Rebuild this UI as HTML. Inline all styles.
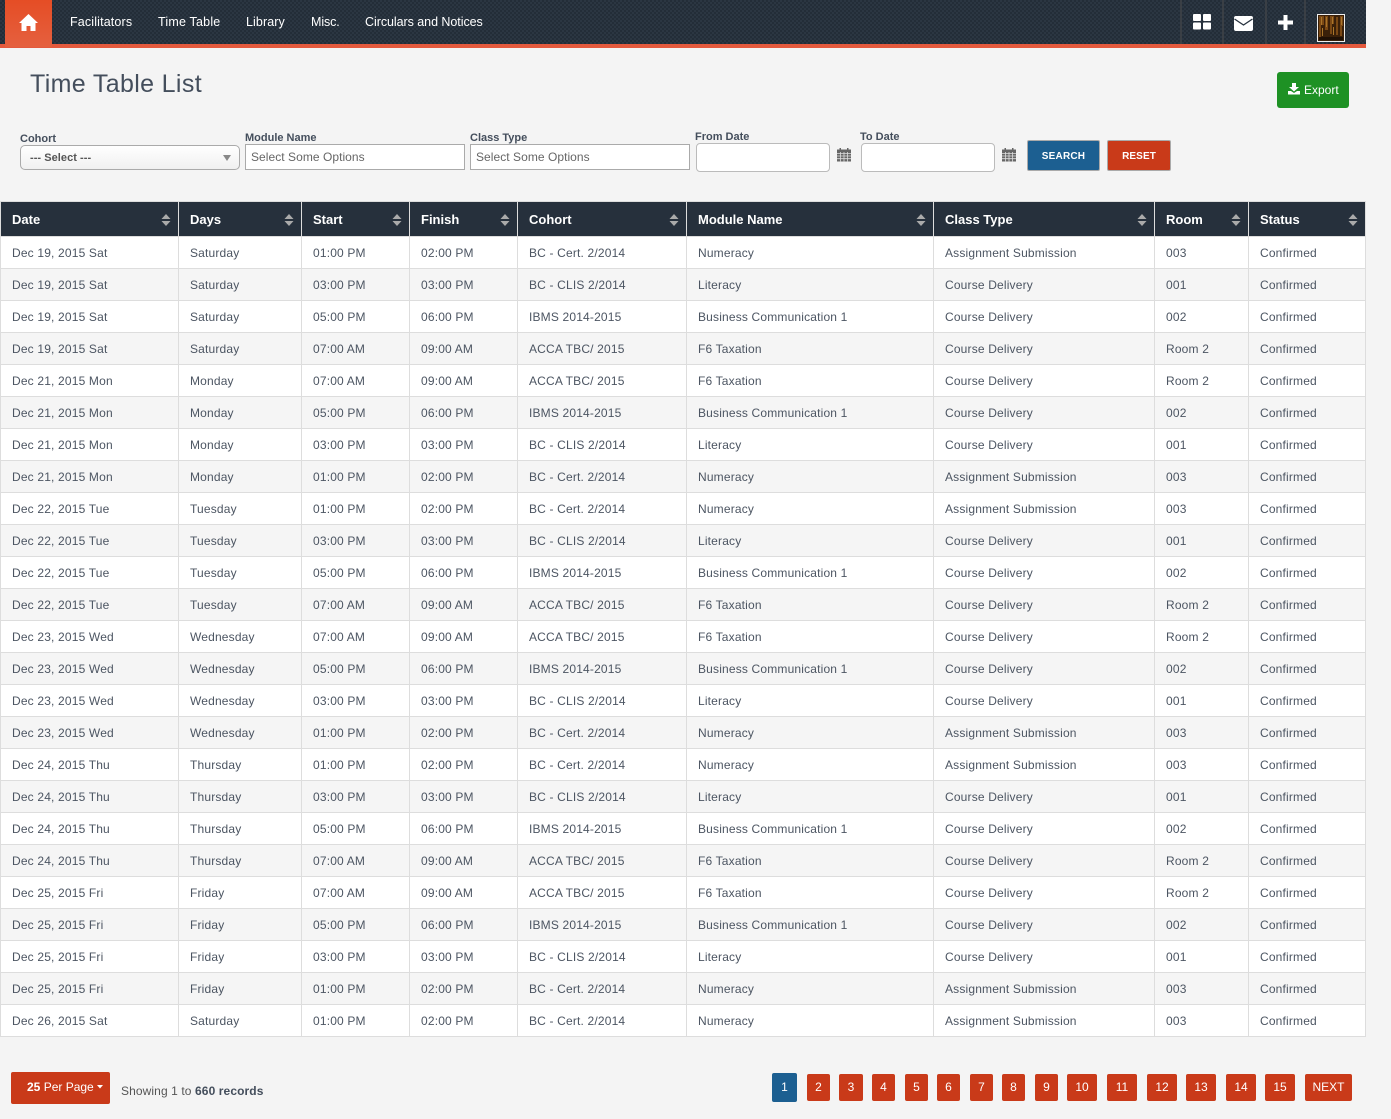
<!DOCTYPE html>
<html><head><meta charset="utf-8"><title>Time Table List</title>
<style>
html,body{margin:0;padding:0}
body{width:1391px;height:1119px;background:#f4f4f4;position:relative;overflow:hidden;font-family:"Liberation Sans",sans-serif;color:#444e5c}
.a{position:absolute;white-space:nowrap}
#nav{left:0;top:0;width:1366px;height:44px;background-color:#27323e;background-image:repeating-conic-gradient(#232d38 0 25%,#2b3642 0 50%);background-size:4px 4px}
#bar{left:0;top:44px;width:1366px;height:4px;background:#e4593d}
#home{left:5px;top:0;width:47px;height:47px;background:linear-gradient(#e54d25,#e5603f)}
.n{top:14px;font-size:12.5px;line-height:16px;color:#fff}
.sep{top:0;width:2px;height:44px;background:#3a3f45}
.lab{font-size:11px;font-weight:bold;line-height:13px;color:#444e5c}
.sel{box-sizing:border-box;background:#fff;border:1px solid #aaa;font-size:12px;line-height:25px;color:#666;padding-left:5px;letter-spacing:.05px}
.dt{box-sizing:border-box;background:#fff;border:1px solid #bbb;border-radius:4px;width:134px;height:29px;top:143px}
.btn{top:140px;height:31px;line-height:31px;text-align:center;color:#fff;font-size:10px;font-weight:bold;border-radius:2px;box-sizing:border-box;border:1px solid #aaa}
table{position:absolute;left:0;top:201px;width:1365px;border-collapse:collapse;table-layout:fixed;font-size:12px;color:#4c5562;letter-spacing:.17px}
th{background:#26303c;color:#fff;height:35px;padding:1px 0 0 11px;text-align:left;font-size:13px;letter-spacing:0;border:1px solid #ddd;position:relative;box-sizing:border-box}
th svg{position:absolute;right:7px;top:11px}
td{height:32px;padding:0 0 0 11px;border:1px solid #ddd;box-sizing:border-box;white-space:nowrap;overflow:hidden}
tr:nth-child(odd) td{background:#fff}
tr:nth-child(even) td{background:#f5f5f5}
.p{top:1074px;height:27px;line-height:27px;background:#c93a19;color:#fff;font-size:12px;text-align:center;border-radius:2px}
</style></head><body>
<div class="a" id="nav"></div><div class="a" id="bar"></div>
<div class="a" id="home"><svg width="47" height="46" viewBox="0 0 47 46" style="position:absolute;left:0;top:0"><path d="M23.5 14 L14 23 L16.500 23 L16.500 31 L21.500 31 L21.500 26 L25.500 26 L25.500 31 L30.500 31 L30.500 23 L33 23Z" fill="#fff"/></svg></div>
<div class="a n" style="left:70px;letter-spacing:.15px">Facilitators</div>
<div class="a n" style="left:158px;letter-spacing:.2px">Time Table</div>
<div class="a n" style="left:246px;letter-spacing:.1px">Library</div>
<div class="a n" style="left:311px;letter-spacing:-.1px">Misc.</div>
<div class="a n" style="left:365px;letter-spacing:-.05px">Circulars and Notices</div>
<div class="a sep" style="left:1180px"></div><div class="a sep" style="left:1222px"></div><div class="a sep" style="left:1265px"></div><div class="a sep" style="left:1304px"></div>
<svg class="a" style="left:1193px;top:14px" width="18" height="16"><rect width="8" height="7" rx="1" fill="#fff"/><rect x="10" width="8" height="7" rx="1" fill="#fff"/><rect y="8.500" width="8" height="7" rx="1" fill="#fff"/><rect x="10" y="8.500" width="8" height="7" rx="1" fill="#fff"/></svg>
<svg class="a" style="left:1234px;top:16px" width="20" height="15"><rect width="19" height="15" rx="2" fill="#fff"/><path d="M0.500 3 L9.500 9 L18.500 3" fill="none" stroke="#27323e" stroke-width="1.300"/></svg>
<svg class="a" style="left:1278px;top:15px" width="15" height="15"><path d="M5.500 0h4v5.500h5.500v4h-5.500v5.500h-4v-5.500h-5.500v-4h5.500z" fill="#fff"/></svg>
<svg class="a" style="left:1317px;top:14px" width="28" height="28"><rect x=".5" y=".5" width="27" height="27" fill="#3a2009" stroke="#eee"/><path d="M2 2h5v9H4v12H2zM8 2h3v14H8zM13 2h4v8h-2v10h-2zM19 3h2v18h-2zM23 2h3v10h-1v10h-2z" fill="#7a4814"/><path d="M4 3h1v8H4zM9 3h1v10H9zM15 3h1v7h-1zM24 3h1v8h-1zM5 14h1v8H5zM16 13h1v8h-1z" fill="#a9752a"/><path d="M2 23h24v3H2z" fill="#1f1005"/></svg>
<div class="a" style="left:30px;top:68px;font-size:25px;line-height:32px;color:#444e5c;letter-spacing:.35px">Time Table List</div>
<div class="a" style="left:1277px;top:72px;width:72px;height:36px;background:#1e9124;border-radius:3px;color:#fff;font-size:12px;line-height:36px;box-sizing:border-box;padding-left:27px">Export<svg style="position:absolute;left:11px;top:11px" width="12" height="12"><path d="M4 0h4v4h3L6 8.500 1 4h3zM0 8h3l3 2 3-2h3v3.500H0z" fill="#fff"/></svg></div>
<div class="a lab" style="left:20px;top:133px">Cohort</div>
<div class="a sel" style="left:20px;top:145px;width:220px;height:25px;border-radius:5px;background:linear-gradient(#fff,#f0f0f0);padding-left:9px;font-size:11px;font-weight:bold;color:#555;line-height:25px">--- Select ---<svg style="position:absolute;left:202px;top:9px" width="9" height="6"><path d="M0 0h8L4 6z" fill="#888"/></svg></div>
<div class="a lab" style="left:245px;top:132px">Module Name</div>
<div class="a sel" style="left:245px;top:144px;width:220px;height:26px">Select Some Options</div>
<div class="a lab" style="left:470px;top:132px">Class Type</div>
<div class="a sel" style="left:470px;top:144px;width:220px;height:26px">Select Some Options</div>
<div class="a lab" style="left:695px;top:131px">From Date</div>
<div class="a dt" style="left:696px"></div>
<svg class="a" style="left:837px;top:148px" width="14" height="14"><rect y="1.500" width="14" height="12" fill="#666"/><path d="M0 5.500h14M0 8h14M0 10.700h14M3.500 4v10M7 4v10M10.500 4v10" stroke="#ddd" stroke-width=".8"/><rect x="2.500" width="1.500" height="3" fill="#666"/><rect x="10" width="1.500" height="3" fill="#666"/></svg>
<div class="a lab" style="left:860px;top:131px">To Date</div>
<div class="a dt" style="left:861px"></div>
<svg class="a" style="left:1002px;top:148px" width="14" height="14"><rect y="1.500" width="14" height="12" fill="#666"/><path d="M0 5.500h14M0 8h14M0 10.700h14M3.500 4v10M7 4v10M10.500 4v10" stroke="#ddd" stroke-width=".8"/><rect x="2.500" width="1.500" height="3" fill="#666"/><rect x="10" width="1.500" height="3" fill="#666"/></svg>
<div class="a btn" style="left:1027px;width:73px;background:#1c5f91;letter-spacing:.2px;line-height:32px">SEARCH</div>
<div class="a btn" style="left:1107px;width:64px;background:#c93a19;letter-spacing:.1px;line-height:32px">RESET</div>
<table>
<colgroup><col style="width:178px"><col style="width:123px"><col style="width:108px"><col style="width:108px"><col style="width:169px"><col style="width:247px"><col style="width:221px"><col style="width:94px"><col style="width:117px"></colgroup>
<thead><tr>
<th>Date<svg width="10" height="14"><path d="M5 1l4.500 5h-9zM5 13l4.500-5h-9z" fill="#aaa"/></svg></th>
<th>Days<svg width="10" height="14"><path d="M5 1l4.500 5h-9zM5 13l4.500-5h-9z" fill="#aaa"/></svg></th>
<th>Start<svg width="10" height="14"><path d="M5 1l4.500 5h-9zM5 13l4.500-5h-9z" fill="#aaa"/></svg></th>
<th>Finish<svg width="10" height="14"><path d="M5 1l4.500 5h-9zM5 13l4.500-5h-9z" fill="#aaa"/></svg></th>
<th>Cohort<svg width="10" height="14"><path d="M5 1l4.500 5h-9zM5 13l4.500-5h-9z" fill="#aaa"/></svg></th>
<th>Module Name<svg width="10" height="14"><path d="M5 1l4.500 5h-9zM5 13l4.500-5h-9z" fill="#aaa"/></svg></th>
<th>Class Type<svg width="10" height="14"><path d="M5 1l4.500 5h-9zM5 13l4.500-5h-9z" fill="#aaa"/></svg></th>
<th>Room<svg width="10" height="14"><path d="M5 1l4.500 5h-9zM5 13l4.500-5h-9z" fill="#aaa"/></svg></th>
<th>Status<svg width="10" height="14"><path d="M5 1l4.500 5h-9zM5 13l4.500-5h-9z" fill="#aaa"/></svg></th>
</tr></thead>
<tbody>
<tr><td>Dec 19, 2015 Sat</td><td>Saturday</td><td>01:00 PM</td><td>02:00 PM</td><td>BC - Cert. 2/2014</td><td>Numeracy</td><td>Assignment Submission</td><td>003</td><td>Confirmed</td></tr>
<tr><td>Dec 19, 2015 Sat</td><td>Saturday</td><td>03:00 PM</td><td>03:00 PM</td><td>BC - CLIS 2/2014</td><td>Literacy</td><td>Course Delivery</td><td>001</td><td>Confirmed</td></tr>
<tr><td>Dec 19, 2015 Sat</td><td>Saturday</td><td>05:00 PM</td><td>06:00 PM</td><td>IBMS 2014-2015</td><td>Business Communication 1</td><td>Course Delivery</td><td>002</td><td>Confirmed</td></tr>
<tr><td>Dec 19, 2015 Sat</td><td>Saturday</td><td>07:00 AM</td><td>09:00 AM</td><td>ACCA TBC/ 2015</td><td>F6 Taxation</td><td>Course Delivery</td><td>Room 2</td><td>Confirmed</td></tr>
<tr><td>Dec 21, 2015 Mon</td><td>Monday</td><td>07:00 AM</td><td>09:00 AM</td><td>ACCA TBC/ 2015</td><td>F6 Taxation</td><td>Course Delivery</td><td>Room 2</td><td>Confirmed</td></tr>
<tr><td>Dec 21, 2015 Mon</td><td>Monday</td><td>05:00 PM</td><td>06:00 PM</td><td>IBMS 2014-2015</td><td>Business Communication 1</td><td>Course Delivery</td><td>002</td><td>Confirmed</td></tr>
<tr><td>Dec 21, 2015 Mon</td><td>Monday</td><td>03:00 PM</td><td>03:00 PM</td><td>BC - CLIS 2/2014</td><td>Literacy</td><td>Course Delivery</td><td>001</td><td>Confirmed</td></tr>
<tr><td>Dec 21, 2015 Mon</td><td>Monday</td><td>01:00 PM</td><td>02:00 PM</td><td>BC - Cert. 2/2014</td><td>Numeracy</td><td>Assignment Submission</td><td>003</td><td>Confirmed</td></tr>
<tr><td>Dec 22, 2015 Tue</td><td>Tuesday</td><td>01:00 PM</td><td>02:00 PM</td><td>BC - Cert. 2/2014</td><td>Numeracy</td><td>Assignment Submission</td><td>003</td><td>Confirmed</td></tr>
<tr><td>Dec 22, 2015 Tue</td><td>Tuesday</td><td>03:00 PM</td><td>03:00 PM</td><td>BC - CLIS 2/2014</td><td>Literacy</td><td>Course Delivery</td><td>001</td><td>Confirmed</td></tr>
<tr><td>Dec 22, 2015 Tue</td><td>Tuesday</td><td>05:00 PM</td><td>06:00 PM</td><td>IBMS 2014-2015</td><td>Business Communication 1</td><td>Course Delivery</td><td>002</td><td>Confirmed</td></tr>
<tr><td>Dec 22, 2015 Tue</td><td>Tuesday</td><td>07:00 AM</td><td>09:00 AM</td><td>ACCA TBC/ 2015</td><td>F6 Taxation</td><td>Course Delivery</td><td>Room 2</td><td>Confirmed</td></tr>
<tr><td>Dec 23, 2015 Wed</td><td>Wednesday</td><td>07:00 AM</td><td>09:00 AM</td><td>ACCA TBC/ 2015</td><td>F6 Taxation</td><td>Course Delivery</td><td>Room 2</td><td>Confirmed</td></tr>
<tr><td>Dec 23, 2015 Wed</td><td>Wednesday</td><td>05:00 PM</td><td>06:00 PM</td><td>IBMS 2014-2015</td><td>Business Communication 1</td><td>Course Delivery</td><td>002</td><td>Confirmed</td></tr>
<tr><td>Dec 23, 2015 Wed</td><td>Wednesday</td><td>03:00 PM</td><td>03:00 PM</td><td>BC - CLIS 2/2014</td><td>Literacy</td><td>Course Delivery</td><td>001</td><td>Confirmed</td></tr>
<tr><td>Dec 23, 2015 Wed</td><td>Wednesday</td><td>01:00 PM</td><td>02:00 PM</td><td>BC - Cert. 2/2014</td><td>Numeracy</td><td>Assignment Submission</td><td>003</td><td>Confirmed</td></tr>
<tr><td>Dec 24, 2015 Thu</td><td>Thursday</td><td>01:00 PM</td><td>02:00 PM</td><td>BC - Cert. 2/2014</td><td>Numeracy</td><td>Assignment Submission</td><td>003</td><td>Confirmed</td></tr>
<tr><td>Dec 24, 2015 Thu</td><td>Thursday</td><td>03:00 PM</td><td>03:00 PM</td><td>BC - CLIS 2/2014</td><td>Literacy</td><td>Course Delivery</td><td>001</td><td>Confirmed</td></tr>
<tr><td>Dec 24, 2015 Thu</td><td>Thursday</td><td>05:00 PM</td><td>06:00 PM</td><td>IBMS 2014-2015</td><td>Business Communication 1</td><td>Course Delivery</td><td>002</td><td>Confirmed</td></tr>
<tr><td>Dec 24, 2015 Thu</td><td>Thursday</td><td>07:00 AM</td><td>09:00 AM</td><td>ACCA TBC/ 2015</td><td>F6 Taxation</td><td>Course Delivery</td><td>Room 2</td><td>Confirmed</td></tr>
<tr><td>Dec 25, 2015 Fri</td><td>Friday</td><td>07:00 AM</td><td>09:00 AM</td><td>ACCA TBC/ 2015</td><td>F6 Taxation</td><td>Course Delivery</td><td>Room 2</td><td>Confirmed</td></tr>
<tr><td>Dec 25, 2015 Fri</td><td>Friday</td><td>05:00 PM</td><td>06:00 PM</td><td>IBMS 2014-2015</td><td>Business Communication 1</td><td>Course Delivery</td><td>002</td><td>Confirmed</td></tr>
<tr><td>Dec 25, 2015 Fri</td><td>Friday</td><td>03:00 PM</td><td>03:00 PM</td><td>BC - CLIS 2/2014</td><td>Literacy</td><td>Course Delivery</td><td>001</td><td>Confirmed</td></tr>
<tr><td>Dec 25, 2015 Fri</td><td>Friday</td><td>01:00 PM</td><td>02:00 PM</td><td>BC - Cert. 2/2014</td><td>Numeracy</td><td>Assignment Submission</td><td>003</td><td>Confirmed</td></tr>
<tr><td>Dec 26, 2015 Sat</td><td>Saturday</td><td>01:00 PM</td><td>02:00 PM</td><td>BC - Cert. 2/2014</td><td>Numeracy</td><td>Assignment Submission</td><td>003</td><td>Confirmed</td></tr>
</tbody></table>
<div class="a" style="left:11px;top:1072px;width:99px;height:32px;background:#c93a19;border-radius:2px;color:#fff;font-size:12px;line-height:31px;box-sizing:border-box;padding-left:16px"><b>25</b> Per Page<svg style="position:absolute;left:86px;top:13px" width="6" height="4"><path d="M0 0h6L3 3.500z" fill="#fff"/></svg></div>
<div class="a" style="left:121px;top:1083px;font-size:12px;line-height:16px;color:#555;letter-spacing:.1px">Showing 1 to <b style="color:#444e5c">660 records</b></div>
<div class="a p" style="left:772px;top:1073px;height:29px;line-height:29px;width:25px;background:#1c5f91">1</div>
<div class="a p" style="left:807px;width:23px">2</div>
<div class="a p" style="left:839px;width:24px">3</div>
<div class="a p" style="left:872px;width:23px">4</div>
<div class="a p" style="left:905px;width:23px">5</div>
<div class="a p" style="left:937px;width:23px">6</div>
<div class="a p" style="left:970px;width:23px">7</div>
<div class="a p" style="left:1002px;width:23px">8</div>
<div class="a p" style="left:1035px;width:23px">9</div>
<div class="a p" style="left:1067px;width:30px">10</div>
<div class="a p" style="left:1107px;width:30px">11</div>
<div class="a p" style="left:1147px;width:30px">12</div>
<div class="a p" style="left:1186px;width:30px">13</div>
<div class="a p" style="left:1226px;width:30px">14</div>
<div class="a p" style="left:1265px;width:30px">15</div>
<div class="a p" style="left:1305px;width:47px">NEXT</div>
</body></html>
